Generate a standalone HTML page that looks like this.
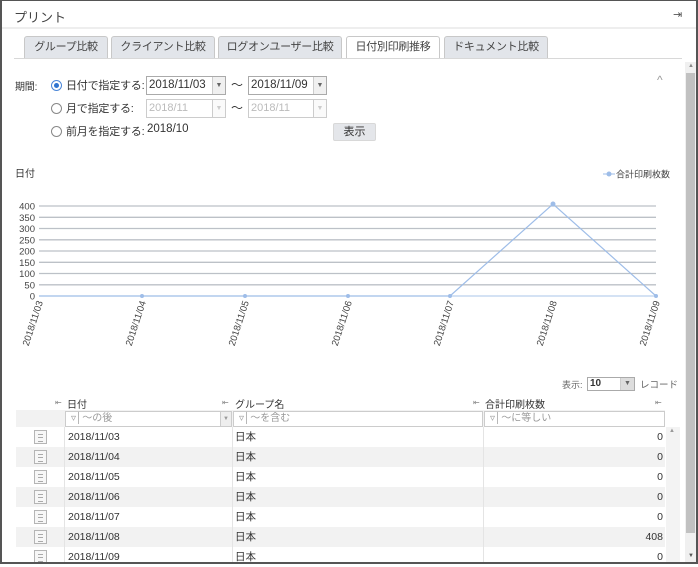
<!DOCTYPE html>
<html><head><meta charset="utf-8"><style>
*{box-sizing:border-box;margin:0;padding:0}
body{width:698px;height:564px;overflow:hidden;background:#fff;font-family:"Liberation Sans","Noto Sans CJK JP",sans-serif;font-size:10px;color:#333;position:relative}
.frame{position:absolute;left:0;top:0;width:698px;height:564px;border:2px solid #555;border-top-width:1px;pointer-events:none;z-index:10}
.a{position:absolute}
.tab{position:absolute;top:36px;height:22px;border:1px solid #c8c8c8;border-bottom:none;background:#e2e5ea;border-radius:3px 3px 0 0;font-size:11px;text-align:center;line-height:21px;color:#444;letter-spacing:-0.3px}
.sel{background:#fff;height:23px}
.inp{position:absolute;height:19px;border:1px solid #aaa;font-size:11.5px;line-height:17px;padding-left:2px;background:#fff}
.inp .dd{position:absolute;right:0;top:0;width:13px;height:17px;border-left:1px solid #ccc;background:#f0f0f0;font-size:7px;text-align:center;line-height:17px;color:#666}
.dis{color:#bbb;border-color:#ccc}
.radio{position:absolute;width:11px;height:11px;border:1px solid #888;border-radius:50%;background:#fff}
.lbl{position:absolute;font-size:11px;letter-spacing:-0.2px}
.row{position:absolute;left:16px;width:649px;height:20px;font-size:10.5px;line-height:20px}
.row span{position:absolute}
.ic{position:absolute;left:18px;top:3px;width:13px;height:14px;border:1px solid #b5b5b5;background:#f7f7f7}
.ic:after{content:"";position:absolute;left:3px;top:3px;width:5px;height:6px;border-top:1px solid #aaa;border-bottom:1px solid #aaa}
.ic:before{content:"";position:absolute;left:3px;top:6px;width:5px;height:0;border-top:1px solid #aaa}
.g{background:#f2f2f2}
.pin{position:absolute;font-size:8px;color:#888}
</style></head><body>
<div class="frame"></div>
<div class="a" style="left:14px;top:7px;font-size:13px;color:#444">プリント</div>
<div class="a" style="left:673px;top:8px;font-size:11px;color:#555">⇥</div>
<div class="a" style="left:2px;top:27px;width:694px;height:2px;background:#eee"></div>
<div class="tab" style="left:24px;width:84px">グループ比較</div>
<div class="tab" style="left:111px;width:104px">クライアント比較</div>
<div class="tab" style="left:218px;width:124px">ログオンユーザー比較</div>
<div class="tab sel" style="left:346px;width:94px">日付別印刷推移</div>
<div class="tab" style="left:444px;width:104px">ドキュメント比較</div>
<div class="a" style="left:14px;top:58px;width:668px;height:1px;background:#d8d8d8"></div>
<div class="a" style="left:685px;top:62px;width:11px;height:500px;background:#f0f0f0"></div>
<div class="a" style="left:686px;top:73px;width:9px;height:460px;background:#c1c1c1"></div>
<div class="a" style="left:688px;top:63px;font-size:6px;color:#888">▲</div>
<div class="a" style="left:688px;top:553px;font-size:6px;color:#555">▼</div>

<div class="lbl" style="left:15px;top:78px;font-size:10px">期間:</div>
<div class="radio" style="left:51px;top:80px;border-color:#4a86d8"><div style="position:absolute;left:2px;top:2px;width:5px;height:5px;border-radius:50%;background:#2f74d0"></div></div>
<div class="lbl" style="left:66px;top:77px">日付で指定する:</div>
<div class="inp" style="left:146px;top:76px;width:80px">2018/11/03<div class="dd">▼</div></div>
<div class="a" style="left:231px;top:76px;font-size:12px">〜</div>
<div class="inp" style="left:248px;top:76px;width:79px">2018/11/09<div class="dd">▼</div></div>
<div class="radio" style="left:51px;top:103px"></div>
<div class="lbl" style="left:66px;top:100px">月で指定する:</div>
<div class="inp dis" style="left:146px;top:99px;width:80px;font-size:11px">2018/11<div class="dd" style="background:#fafafa;color:#ccc">▼</div></div>
<div class="a" style="left:231px;top:99px;font-size:12px">〜</div>
<div class="inp dis" style="left:248px;top:99px;width:79px;font-size:11px">2018/11<div class="dd" style="background:#fafafa;color:#ccc">▼</div></div>
<div class="radio" style="left:51px;top:126px"></div>
<div class="lbl" style="left:66px;top:123px">前月を指定する:</div>
<div class="a" style="left:147px;top:123px;font-size:11.5px">2018/10</div>
<div class="a" style="left:333px;top:123px;width:43px;height:18px;background:#e4e6ea;border:1px solid #d8d8d8;border-radius:2px;text-align:center;line-height:16px;font-size:11px">表示</div>
<div class="a" style="left:657px;top:73px;font-size:12px;color:#999">^</div>

<div class="a" style="left:15px;top:165px;font-size:10px">日付</div>
<svg class="a" style="left:0;top:160px" width="680" height="200">
<g stroke="#bcc1c7" stroke-width="1.3">
<line x1="39" y1="46" x2="656" y2="46"/><line x1="39" y1="57.3" x2="656" y2="57.3"/><line x1="39" y1="68.5" x2="656" y2="68.5"/><line x1="39" y1="79.8" x2="656" y2="79.8"/><line x1="39" y1="91" x2="656" y2="91"/><line x1="39" y1="102.3" x2="656" y2="102.3"/><line x1="39" y1="113.5" x2="656" y2="113.5"/><line x1="39" y1="124.8" x2="656" y2="124.8"/>
</g>
<line x1="39" y1="136" x2="656" y2="136" stroke="#a8c4e8"/>
<polyline points="39,136 142,136 245,136 348,136 450,136 553,44 656,136" fill="none" stroke="#9ebde8" stroke-width="1.2"/>
<g fill="#9ebde8"><circle cx="142" cy="136" r="2"/><circle cx="245" cy="136" r="2"/><circle cx="348" cy="136" r="2"/><circle cx="450" cy="136" r="2"/><circle cx="553" cy="44" r="2.5"/><circle cx="656" cy="136" r="2"/></g>
<g font-size="9.5" fill="#444" text-anchor="end" font-family="Liberation Sans,sans-serif">
<text x="35" y="49.5">400</text><text x="35" y="60.8">350</text><text x="35" y="72">300</text><text x="35" y="83.3">250</text><text x="35" y="94.5">200</text><text x="35" y="105.8">150</text><text x="35" y="117">100</text><text x="35" y="128.3">50</text><text x="35" y="139.5">0</text>
<text transform="translate(43,142) rotate(-72)">2018/11/03</text>
<text transform="translate(146,142) rotate(-72)">2018/11/04</text>
<text transform="translate(249,142) rotate(-72)">2018/11/05</text>
<text transform="translate(352,142) rotate(-72)">2018/11/06</text>
<text transform="translate(454,142) rotate(-72)">2018/11/07</text>
<text transform="translate(557,142) rotate(-72)">2018/11/08</text>
<text transform="translate(660,142) rotate(-72)">2018/11/09</text>
</g>
<line x1="603" y1="14" x2="615" y2="14" stroke="#9ebde8"/><circle cx="609" cy="14" r="2.5" fill="#9ebde8"/>
<text x="616" y="17.5" font-size="9" fill="#444">合計印刷枚数</text>
</svg>

<div class="a" style="left:562px;top:378px;font-size:9px;color:#666">表示:</div>
<div class="inp" style="left:587px;top:377px;width:48px;height:14px;font-size:10px;line-height:12px;font-weight:bold">10<div class="dd" style="height:12px;line-height:12px;width:14px;background:#ddd">▼</div></div>
<div class="a" style="left:640px;top:377px;font-size:9.5px;color:#666">レコード</div>

<div class="pin" style="left:55px;top:398px">⇤</div>
<div class="a" style="left:67px;top:396px;font-size:10px">日付</div>
<div class="pin" style="left:222px;top:398px">⇤</div>
<div class="a" style="left:235px;top:396px;font-size:10px">グループ名</div>
<div class="pin" style="left:473px;top:398px">⇤</div>
<div class="a" style="left:485px;top:396px;font-size:10px">合計印刷枚数</div>
<div class="pin" style="left:655px;top:398px">⇤</div>
<div class="a" style="left:16px;top:410px;width:649px;height:17px;background:#f2f2f2"></div>
<div class="a" style="left:65px;top:411px;width:167px;height:16px;border:1px solid #ccc;background:#fff;font-size:10px;color:#999;line-height:14px;padding-left:5px">▿│〜の後<div style="position:absolute;right:0;top:0;width:11px;height:14px;background:#eee;border-left:1px solid #ccc;font-size:6px;text-align:center">▼</div></div>
<div class="a" style="left:233px;top:411px;width:250px;height:16px;border:1px solid #ccc;background:#fff;font-size:10px;color:#999;line-height:14px;padding-left:5px">▿│〜を含む</div>
<div class="a" style="left:484px;top:411px;width:181px;height:16px;border:1px solid #ccc;background:#fff;font-size:10px;color:#999;line-height:14px;padding-left:5px">▿│〜に等しい</div>

<div class="row" style="top:427px"><div class="ic"></div><span style="left:52px">2018/11/03</span><span style="left:219px">日本</span><span style="right:2px">0</span></div>
<div class="row g" style="top:447px"><div class="ic"></div><span style="left:52px">2018/11/04</span><span style="left:219px">日本</span><span style="right:2px">0</span></div>
<div class="row" style="top:467px"><div class="ic"></div><span style="left:52px">2018/11/05</span><span style="left:219px">日本</span><span style="right:2px">0</span></div>
<div class="row g" style="top:487px"><div class="ic"></div><span style="left:52px">2018/11/06</span><span style="left:219px">日本</span><span style="right:2px">0</span></div>
<div class="row" style="top:507px"><div class="ic"></div><span style="left:52px">2018/11/07</span><span style="left:219px">日本</span><span style="right:2px">0</span></div>
<div class="row g" style="top:527px"><div class="ic"></div><span style="left:52px">2018/11/08</span><span style="left:219px">日本</span><span style="right:2px">408</span></div>
<div class="row" style="top:547px"><div class="ic"></div><span style="left:52px">2018/11/09</span><span style="left:219px">日本</span><span style="right:2px">0</span></div>
<div class="a" style="left:64px;top:427px;width:1px;height:137px;background:#e4e4e4"></div>
<div class="a" style="left:232px;top:427px;width:1px;height:137px;background:#e4e4e4"></div>
<div class="a" style="left:483px;top:427px;width:1px;height:137px;background:#e4e4e4"></div>
<div class="a" style="left:666px;top:427px;width:14px;height:137px;background:#f3f3f3"></div>
<div class="a" style="left:669px;top:428px;font-size:6px;color:#999">▲</div>
</body></html>
